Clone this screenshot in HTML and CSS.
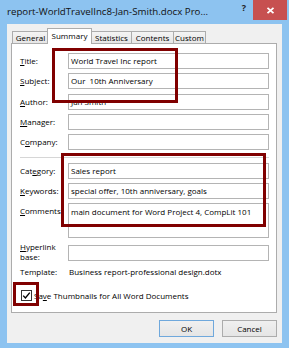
FILE: index.html
```html
<!DOCTYPE html>
<html>
<head>
<meta charset="utf-8">
<link rel="stylesheet" href="styles.css">
</head>
<body>
<div class="window">
  <div class="titlebar">
    <span class="title">report-WorldTravelInc8-Jan-Smith.docx Pro...</span>
    <span class="help">?</span>
    <span class="close"><svg width="9" height="7" viewBox="0 0 9 7"><path d="M1.5 0.8 L7.5 6.2 M7.5 0.8 L1.5 6.2" stroke="#fff" stroke-width="1.8"/></svg></span>
  </div>
  <div class="client">
    <div class="tabs">
      <div class="tab t-general">General</div>
      <div class="tab active t-summary">Summary</div>
      <div class="tab t-stats">Statistics</div>
      <div class="tab t-contents">Contents</div>
      <div class="tab t-custom">Custom</div>
    </div>
    <div class="panel">
      <div class="row"><span class="lbl"><u>T</u>itle:</span><div class="field">World Travel Inc report</div></div>
      <div class="row"><span class="lbl"><u>S</u>ubject:</span><div class="field">Our  10th Anniversary</div></div>
      <div class="row"><span class="lbl"><u>A</u>uthor:</span><div class="field">Jan Smith</div></div>
      <div class="row"><span class="lbl"><u>M</u>anager:</span><div class="field"></div></div>
      <div class="row"><span class="lbl">C<u>o</u>mpany:</span><div class="field"></div></div>
      <div class="sep"></div>
      <div class="row"><span class="lbl">Cat<u>e</u>gory:</span><div class="field">Sales report</div></div>
      <div class="row"><span class="lbl"><u>K</u>eywords:</span><div class="field">special offer, 10th anniversary, goals</div></div>
      <div class="row top"><span class="lbl"><u>C</u>omments:</span><div class="field multi">main document for Word Project 4, CompLit 101</div></div>
      <div class="row link"><span class="lbl two"><span class="ln"><u>H</u>yperlink</span><span class="ln">base:</span></span><div class="field"></div></div>
      <div class="row tpl"><span class="lbl">Template:</span><span class="value">Business report-professional design.dotx</span></div>
      <div class="check-row">
        <span class="checkbox"><svg width="9" height="9" viewBox="0 0 9 9"><path d="M1.2 4.6 L3.4 7 L7.8 1.6" fill="none" stroke="#000" stroke-width="1.4"/></svg></span>
        <span class="check-text">Sa<u>v</u>e Thumbnails for All Word Documents</span>
      </div>
    </div>
    <div class="buttons">
      <div class="btn default">OK</div>
      <div class="btn">Cancel</div>
    </div>
  </div>
  <div class="mark mark-1"></div>
  <div class="mark mark-2"></div>
  <div class="mark mark-3"></div>
</div>
</body>
</html>
```

FILE: styles.css
```css
* { box-sizing: border-box; }
html, body { margin: 0; padding: 0; }
body {
  width: 289px;
  height: 348px;
  overflow: hidden;
  font-family: "Open Sans", "Noto Sans", sans-serif;
  font-size: 8px;
  color: #000;
  background: #8dc3f0;
}
.window {
  position: relative;
  width: 289px;
  height: 348px;
  background: #8dc3f0;
  padding: 0 7px 5px 7px;
  display: flex;
  flex-direction: column;
}
.titlebar {
  height: 24px;
  flex: none;
  display: flex;
  align-items: flex-start;
  margin-right: -5px;
}
.title {
  font-size: 9.7px;
  line-height: 14px;
  padding-top: 5px;
  white-space: nowrap;
  color: #111;
}
.help {
  margin-left: auto;
  margin-right: 7px;
  font-size: 9px;
  font-weight: bold;
  line-height: 12px;
  padding-top: 2px;
  color: #222;
}
.close {
  width: 34px;
  height: 20px;
  background: #c75050;
  display: flex;
  align-items: center;
  justify-content: center;
}
.close svg { display: block; }
.client {
  flex: 1;
  background: #f0f0f0;
  padding: 4px 5px 0 4px;
  display: flex;
  flex-direction: column;
}
.tabs {
  display: flex;
  align-items: flex-end;
  height: 15px;
  flex: none;
  padding-left: 1px;
  position: relative;
  z-index: 1;
}
.tab {
  height: 12px;
  border: 1px solid #acacac;
  border-bottom: none;
  background: linear-gradient(#f4f4f4, #e6e6e6);
  text-align: center;
  line-height: 11px;
  margin-left: -1px;
  white-space: nowrap;
}
.t-general { width: 37px; margin-left: 0; }
.t-summary {
  width: 45px;
  height: 16px;
  margin-left: -2px;
  margin-right: -2px;
  margin-bottom: -1px;
  background: #fff;
  line-height: 14px;
  position: relative;
  z-index: 2;
}
.t-stats { width: 41px; margin-left: 1px; }
.t-contents { width: 43px; }
.t-custom { width: 33px; }
.panel {
  height: 270px;
  flex: none;
  background: #fff;
  border: 1px solid #acacac;
  padding: 9px 7px 0 8px;
}
.row {
  display: flex;
  align-items: center;
}
.row + .row { margin-top: 4.25px; }
.lbl {
  width: 48px;
  flex: none;
  white-space: nowrap;
  line-height: 10px;
}
.field {
  width: 201px;
  height: 16px;
  border: 1px solid #b4b4b4;
  background: #fff;
  padding-left: 2px;
  line-height: 14px;
  white-space: pre;
  overflow: hidden;
}
.sep {
  height: 1px;
  background: #d6d6d6;
  margin: 7px 0 5px;
}
.sep + .row { margin-top: 0; }
.row.top { align-items: flex-start; margin-top: 4px; }
.row.top .lbl { padding-top: 3px; }
.field.multi { height: 35px; padding-top: 1px; }
.row.link { margin-top: 7px; align-items: flex-start; }
.lbl.two {
  display: flex;
  flex-direction: column;
  margin-top: -3px;
}
.lbl.two .ln { height: 9px; line-height: 9px; overflow: visible; }
.lbl.two .ln + .ln { margin-top: 0.5px; }
.row.tpl { margin-top: 6px; }
.value { padding-left: 1px; line-height: 10px; white-space: nowrap; }
.check-row {
  display: flex;
  align-items: center;
  margin-top: 13px;
  padding-left: 1px;
}
.checkbox {
  width: 11px;
  height: 11px;
  border: 1px solid #333;
  background: #fff;
  display: flex;
  align-items: center;
  justify-content: center;
}
.checkbox svg { display: block; }
.check-text { margin-left: 2px; line-height: 11px; white-space: nowrap; }
.buttons {
  display: flex;
  justify-content: flex-end;
  gap: 8px;
  margin-top: 7px;
}
.btn {
  width: 55px;
  height: 17px;
  border: 1px solid #acacac;
  background: linear-gradient(#f0f0f0, #e5e5e5);
  text-align: center;
  line-height: 15px;
}
.btn.default { border-color: #6fa8dc; }
.mark {
  position: absolute;
  border: 3px solid #800000;
}
.mark-1 { left: 52px; top: 48px; width: 126px; height: 55px; }
.mark-2 { left: 61px; top: 153px; width: 205px; height: 74px; }
.mark-3 { left: 13px; top: 282px; width: 26px; height: 24px; }
```
